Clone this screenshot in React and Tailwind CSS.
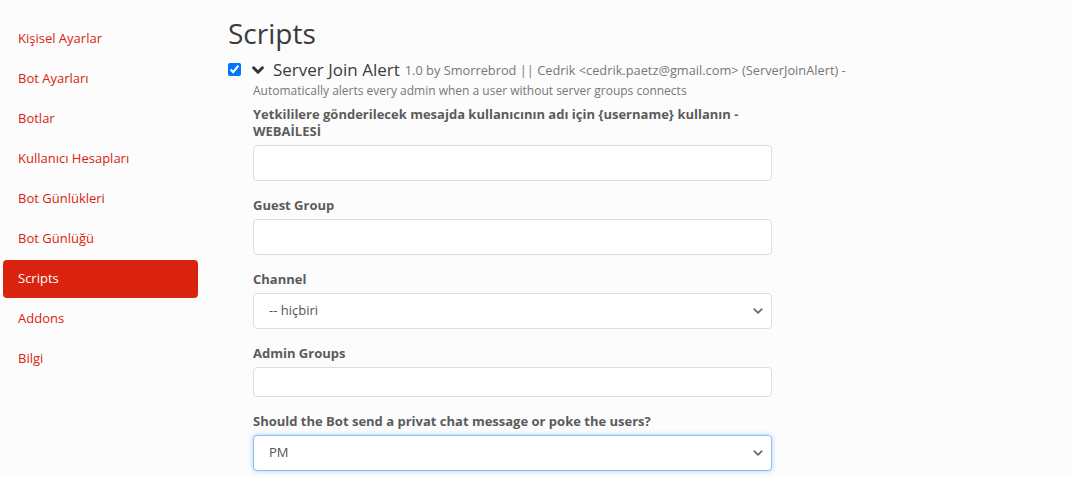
import React from 'react';

const navItems = [
  'Kişisel Ayarlar',
  'Bot Ayarları',
  'Botlar',
  'Kullanıcı Hesapları',
  'Bot Günlükleri',
  'Bot Günlüğü',
  'Scripts',
  'Addons',
  'Bilgi',
];

function Chevron({ className, width = '2.2' }) {
  return (
    <svg viewBox="0 0 16 16" className={className} fill="none" stroke="currentColor" strokeWidth={width} strokeLinecap="round" strokeLinejoin="round">
      <path d="M3 5.5l5 5 5-5" />
    </svg>
  );
}

function Label({ children }) {
  return <div className="text-[13px] leading-[17px] font-bold text-[#5b5b5b] mb-[5px]">{children}</div>;
}

function TextInput({ h = 'h-[36px]' }) {
  return (
    <input
      type="text"
      className={`w-full ${h} bg-white border border-[#dedede] rounded-[4px] px-[15px] text-[13px] outline-none`}
    />
  );
}

function Select({ value, focused }) {
  return (
    <div className="relative">
      <select
        defaultValue={value}
        className={`w-full h-[36px] appearance-none bg-white rounded-[4px] pl-[15px] text-[13px] text-[#555] outline-none border ${
          focused
            ? 'border-[#8cc0f2] shadow-[0_0_5px_rgba(102,170,235,0.55)]'
            : 'border-[#dedede]'
        }`}
      >
        <option>{value}</option>
      </select>
      <Chevron className="absolute right-[8px] top-[12px] w-[12px] h-[12px] text-[#666] pointer-events-none" />
    </div>
  );
}

export default function App() {
  return (
    <div className="min-h-screen bg-[#fcfcfc] flex font-['Open_Sans',sans-serif]">
      <nav className="w-[195px] ml-[3px] pt-[20px] flex flex-col gap-[2px] shrink-0">
        {navItems.map((item) => (
          <div
            key={item}
            className={`h-[38px] flex items-center px-[15px] text-[13px] rounded-[4px] ${
              item === 'Scripts' ? 'bg-[#d9230f] text-white' : 'text-[#d9230f]'
            }`}
          >
            {item}
          </div>
        ))}
      </nav>

      <main className="ml-[30px] pt-[17px]">
        <h2 className="text-[28px] leading-[1.2] text-[#3a3a3a]">Scripts</h2>

        <div className="mt-[7px] flex items-center h-[24px]">
          <input type="checkbox" defaultChecked className="m-0 w-[13px] h-[13px]" />
          <Chevron width="3.4" className="ml-[10px] w-[14px] h-[14px] text-[#333]" />
          <span className="ml-[8px] text-[17px] text-[#3a3a3a]">Server Join Alert</span>
          <span className="ml-[5px] text-[12.8px] text-[#777] mt-[2px]">
            1.0 by Smorrebrod || Cedrik &lt;cedrik.paetz@gmail.com&gt; (ServerJoinAlert) -
          </span>
        </div>

        <div className="pl-[25px] w-[544px]">
          <div className="mt-[1px] text-[12px] leading-[16px] text-[#777]">
            Automatically alerts every admin when a user without server groups connects
          </div>

          <div className="mt-[7px]">
            <Label>Yetkililere gönderilecek mesajda kullanıcının adı için {'{username}'} kullanın - WEBAİLESİ</Label>
            <TextInput />
          </div>

          <div className="mt-[16px]">
            <Label>Guest Group</Label>
            <TextInput />
          </div>

          <div className="mt-[16px]">
            <Label>Channel</Label>
            <Select value="-- hiçbiri" />
          </div>

          <div className="mt-[16px]">
            <Label>Admin Groups</Label>
            <TextInput h="h-[30px]" />
          </div>

          <div className="mt-[16px]">
            <Label>Should the Bot send a privat chat message or poke the users?</Label>
            <Select value="PM" focused />
          </div>
        </div>
      </main>
    </div>
  );
}
